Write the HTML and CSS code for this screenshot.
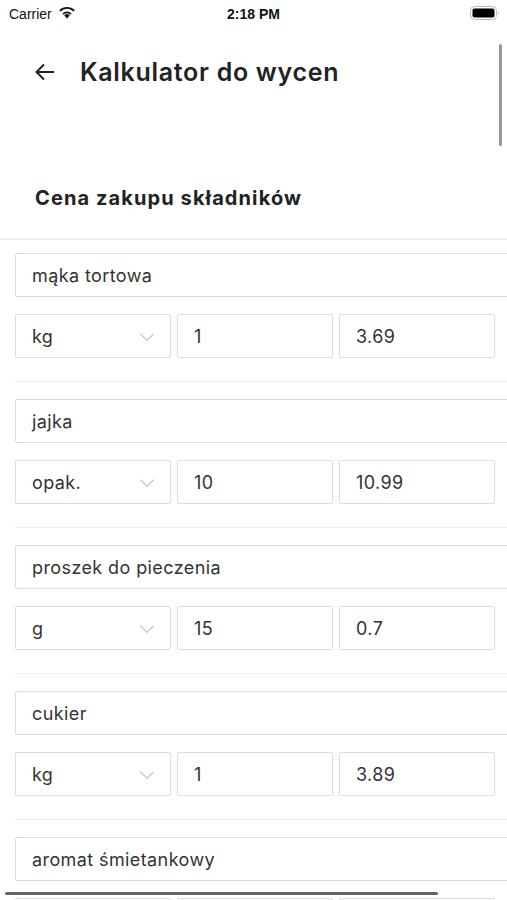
FILE: index.html
```html
<!DOCTYPE html>
<html lang="pl">
<head>
  <meta charset="UTF-8">
  <title>Kalkulator do wycen</title>
  <link rel="stylesheet" href="styles.css">
</head>
<body>

<div class="status-bar">
  <div class="carrier">
    Carrier
    <svg class="wifi" width="18" height="13" viewBox="0 0 18 13">
      <path d="M9 12.5 L6.2 9.4 A4 4 0 0 1 11.8 9.4 Z" fill="#111"/>
      <path d="M4.4 7.4 A6.6 6.6 0 0 1 13.6 7.4 L12.4 8.7 A4.9 4.9 0 0 0 5.6 8.7 Z" fill="#111"/>
      <path d="M1.2 4.2 A11 11 0 0 1 16.8 4.2 L15.5 5.6 A9.1 9.1 0 0 0 2.5 5.6 Z" fill="#111"/>
    </svg>
  </div>
  <div class="clock">2:18 PM</div>
  <div class="battery">
    <svg width="30" height="14" viewBox="0 0 30 14">
      <rect x="0.5" y="0.5" width="26" height="13" rx="4" fill="none" stroke="#bbb"/>
      <rect x="2.5" y="2.5" width="22" height="9" rx="2" fill="#000"/>
      <path d="M28 5 Q29.5 7 28 9 Z" fill="#999"/>
    </svg>
  </div>
</div>

<div class="app-bar">
  <svg class="back" width="20" height="18" viewBox="0 0 20 18">
    <path d="M19 9 H2 M9 1.5 L1.5 9 L9 16.5" fill="none" stroke="#222" stroke-width="2"/>
  </svg>
  <h1>Kalkulator do wycen</h1>
</div>

<h2 class="section-title">Cena zakupu składników</h2>
<div class="divider"></div>

<div class="ingredients">
  <div class="ingredient">
    <div class="field name">mąka tortowa</div>
    <div class="row">
      <div class="field unit">kg <span class="chevron"></span></div>
      <div class="field">1</div>
      <div class="field">3.69</div>
    </div>
  </div>
  <div class="ingredient">
    <div class="field name">jajka</div>
    <div class="row">
      <div class="field unit">opak. <span class="chevron"></span></div>
      <div class="field">10</div>
      <div class="field">10.99</div>
    </div>
  </div>
  <div class="ingredient">
    <div class="field name">proszek do pieczenia</div>
    <div class="row">
      <div class="field unit">g <span class="chevron"></span></div>
      <div class="field">15</div>
      <div class="field">0.7</div>
    </div>
  </div>
  <div class="ingredient">
    <div class="field name">cukier</div>
    <div class="row">
      <div class="field unit">kg <span class="chevron"></span></div>
      <div class="field">1</div>
      <div class="field">3.89</div>
    </div>
  </div>
  <div class="ingredient">
    <div class="field name">aromat śmietankowy</div>
    <div class="row">
      <div class="field unit"><span class="chevron"></span></div>
      <div class="field"></div>
      <div class="field"></div>
    </div>
  </div>
</div>

<div class="scroll-v"></div>
<div class="scroll-h"></div>

</body>
</html>
```

FILE: styles.css
```css
html, body { margin: 0; height: 900px; overflow: hidden; }
body { font-family: "Liberation Sans", Arial, sans-serif; background: #fff; color: #222; position: relative; width: 507px; }

.status-bar { height: 27px; display: flex; align-items: center; justify-content: space-between; padding: 0 7px 0 9px; font-size: 14px; color: #111; position: relative; }
.carrier { display: flex; align-items: center; gap: 6px; }
.wifi { margin-top: -2px; }
.clock { position: absolute; left: 0; right: 0; text-align: center; font-weight: bold; pointer-events: none; }
.battery { display: flex; margin-top: -1px; }

.app-bar { height: 89px; display: flex; align-items: center; padding-left: 35px; }
.back { margin-right: 25px; }
h1 { margin: 0; font-family: Inter, sans-serif; font-size: 25px; font-weight: 600; color: #222; letter-spacing: 0.7px; }

.section-title { margin: 70px 0 0 35px; font-family: Inter, sans-serif; font-size: 20px; font-weight: 700; line-height: 24px; color: #222; letter-spacing: 1.1px; }
.divider { height: 2px; background: #f0f0f0; margin-top: 28px; }

.ingredients { padding: 13px 0 0 15px; }
.ingredient { padding-bottom: 17px; }
.ingredient + .ingredient { border-top: 1px solid #eee; padding-top: 17px; }
.ingredient:first-child { padding-top: 0; }

.field { box-sizing: border-box; height: 44px; border: 1px solid #ddd; border-radius: 2px; display: flex; align-items: center; padding-left: 16px; font-family: Inter, sans-serif; font-size: 18px; letter-spacing: 0.4px; color: #333; position: relative; }
.field.name { width: 520px; }
.row { display: flex; gap: 6px; margin-top: 17px; margin-bottom: 6px; }
.row .field { width: 156px; }
.chevron { position: absolute; right: 18px; top: 14px; width: 9px; height: 9px; border-right: 1px solid #bbb; border-bottom: 1px solid #bbb; transform: rotate(45deg); }

.scroll-v { position: absolute; left: 499px; top: 44px; width: 3px; height: 102px; border-radius: 2px; background: #999; }
.scroll-h { position: absolute; left: 5px; top: 892px; width: 433px; height: 3px; border-radius: 2px; background: #666; }
```
